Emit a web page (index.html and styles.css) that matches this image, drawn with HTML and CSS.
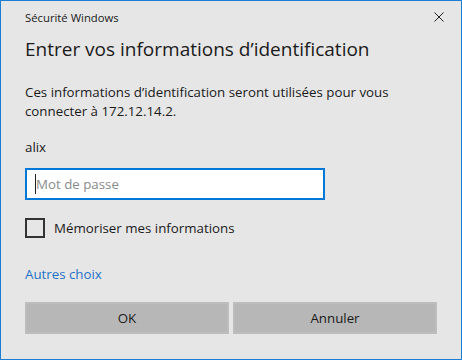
FILE: index.html
```html
<!DOCTYPE html>
<html lang="fr">
<head>
<meta charset="utf-8">
<title>Sécurité Windows</title>
<link rel="stylesheet" href="styles.css">
</head>
<body>
<div class="window">
  <div class="titlebar">
    <span class="title">Sécurité Windows</span>
    <svg class="close" width="10" height="10" viewBox="0 0 10 10"><path d="M0.5 0.5L9.5 9.5M9.5 0.5L0.5 9.5" stroke="#222" stroke-width="1" fill="none"/></svg>
  </div>
  <div class="content">
    <h1 class="heading">Entrer vos informations d’identification</h1>
    <p class="desc">Ces informations d’identification seront utilisées pour vous connecter à 172.12.14.2.</p>
    <div class="user">alix</div>
    <div class="field"><span class="caret"></span><span class="placeholder">Mot de passe</span></div>
    <label class="check"><span class="box"></span><span class="check-label">Mémoriser mes informations</span></label>
    <a class="more" href="#">Autres choix</a>
  </div>
  <div class="buttons">
    <button class="btn">OK</button>
    <button class="btn">Annuler</button>
  </div>
</div>
</body>
</html>
```
FILE: styles.css
```css
* { box-sizing: border-box; }
html, body { margin: 0; padding: 0; background: #e6e6e6; }
.window {
  width: 462px;
  height: 360px;
  border: 1px solid #1a7fd4;
  background: #e6e6e6;
  font-family: "Open Sans", "Noto Sans", sans-serif;
  color: #1a1a1a;
  display: flex;
  flex-direction: column;
}
.titlebar {
  height: 32px;
  display: flex;
  align-items: center;
  justify-content: space-between;
  padding: 0 17px 0 24px;
}
.title { font-size: 11.3px; color: #1a1a1a; }
.close { display: block; }
.content { padding: 0 24px; display: flex; flex-direction: column; align-items: flex-start; }
.heading { font-size: 19px; font-weight: normal; margin: 0; line-height: 28px; margin-top: 2px; }
.desc { font-size: 13.3px; line-height: 19px; margin: 20px 0 0; width: 390px; }
.user { font-size: 13.3px; line-height: 18px; margin-top: 17px; }
.field {
  margin-top: 12px;
  width: 300px;
  height: 32px;
  border: 2px solid #0078d7;
  background: #fff;
  display: flex;
  align-items: center;
  padding-left: 8px;
}
.caret { width: 1px; height: 20px; background: #222; }
.placeholder { font-size: 13.3px; color: #8a8a8a; }
.check { display: flex; align-items: center; margin-top: 18px; }
.box { width: 20px; height: 20px; border: 2px solid #333; }
.check-label { font-size: 13.3px; margin-left: 9px; }
.more { font-size: 13.3px; line-height: 18px; color: #1f72c9; text-decoration: none; margin-top: 27px; }
.buttons {
  display: grid;
  grid-template-columns: 1fr 1fr;
  gap: 4px;
  padding: 0 24px;
  margin-top: 19px;
}
.btn {
  height: 32px;
  border: 2px solid #bdbdbd;
  background: #b7b7b7;
  font-family: inherit;
  font-size: 13.3px;
  color: #1a1a1a;
}
```
